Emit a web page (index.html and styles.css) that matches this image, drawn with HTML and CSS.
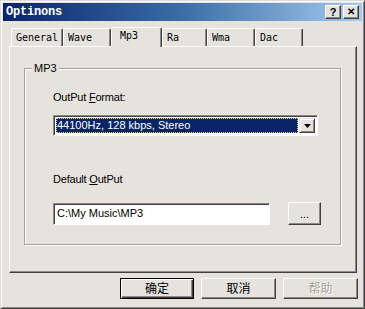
FILE: index.html
```html
<!DOCTYPE html>
<html lang="en">
<head>
    <meta charset="UTF-8">
    <title>Optinons</title>
    <link rel="stylesheet" href="styles.css">
</head>
<body>

    <div class="window">
        <div class="titlebar">
            <span class="title">Optinons</span>
            <div class="title-btns">
                <span class="tbtn">?</span>
                <span class="tbtn close">&#x2715;</span>
            </div>
        </div>

        <div class="tabs">
            <div class="tab t-general">General</div>
            <div class="tab t-wave">Wave</div>
            <div class="tab active t-mp3">Mp3</div>
            <div class="tab t-ra">Ra</div>
            <div class="tab t-wma">Wma</div>
            <div class="tab t-dac">Dac</div>
        </div>

        <div class="panel">
            <div class="group">
                <span class="group-title">MP3</span>
                <div class="label">OutPut <u>F</u>ormat:</div>
                <div class="combo">
                    <div class="combo-value"><span>44100Hz, 128 kbps, Stereo</span></div>
                    <div class="combo-arrow">
                        <svg width="7" height="4" viewBox="0 0 7 4"><path d="M0 0h7L3.5 4z" fill="#000"/></svg>
                    </div>
                </div>
                <div class="label second">Default <u>O</u>utPut</div>
                <div class="path-row">
                    <div class="textbox">C:\My Music\MP3</div>
                    <div class="btn browse">...</div>
                </div>
            </div>
        </div>

        <div class="buttons">
            <div class="btn default">确定</div>
            <div class="btn">取消</div>
            <div class="btn disabled">帮助</div>
        </div>
    </div>

</body>
</html>
```

FILE: styles.css
```css
:root {
    --face: #e6e3de;
    --light: #ffffff;
    --shadow: #8c8a86;
    --dark: #404040;
    --navy: #0a246a;
    --ui-font: 'Liberation Sans', Arial, sans-serif;
    --mono-font: 'Liberation Mono', 'DejaVu Sans Mono', monospace;
    --tab-font: 'DejaVu Sans Mono', 'Liberation Mono', monospace;
    --cjk-font: 'Noto Sans CJK SC', sans-serif;
}

body {
    margin: 0;
    background: var(--face);
}

/* Dialog frame */
.window {
    width: 365px;
    height: 309px;
    box-sizing: border-box;
    background: var(--face);
    border: 1px solid;
    border-color: #dcdad5 var(--dark) var(--dark) #dcdad5;
    box-shadow: inset 1px 1px 0 var(--light), inset -1px -1px 0 var(--shadow);
    padding: 2px;
    display: flex;
    flex-direction: column;
}

.titlebar {
    height: 18px;
    background: linear-gradient(to right, #0a246a 0%, #3a6ea5 50%, #a6caf0 100%);
    display: flex;
    align-items: center;
    justify-content: space-between;
    padding: 0 3px 0 3px;
}

.title {
    font-family: var(--mono-font);
    font-weight: bold;
    font-size: 12px;
    color: #fff;
    letter-spacing: -0.2px;
}

.title-btns {
    display: flex;
    gap: 2px;
}

.tbtn {
    width: 16px;
    height: 14px;
    box-sizing: border-box;
    background: var(--face);
    border: 1px solid;
    border-color: var(--light) var(--dark) var(--dark) var(--light);
    box-shadow: inset -1px -1px 0 var(--shadow);
    font-family: var(--ui-font);
    font-weight: bold;
    font-size: 11px;
    line-height: 12px;
    text-align: center;
    color: #000;
}

.tbtn.close {
    font-size: 10px;
}

/* Tab strip */
.tabs {
    display: flex;
    align-items: flex-end;
    height: 20px;
    margin-top: 5px;
    padding-left: 8px;
    position: relative;
    z-index: 1;
}

.tab {
    height: 18px;
    box-sizing: border-box;
    border-top: 1px solid var(--light);
    border-left: 1px solid var(--light);
    border-right: 1px solid var(--dark);
    box-shadow: inset -1px 0 0 var(--shadow);
    border-radius: 2px 2px 0 0;
    font-family: var(--tab-font);
    font-size: 10px;
    line-height: 18px;
    padding-left: 4px;
    color: #000;
}

.t-general { width: 52px; }
.t-wave { width: 48px; }
.t-mp3 { width: 51px; }
.t-ra { width: 45px; }
.t-wma { width: 48px; }
.t-dac { width: 48px; }

.tab.active {
    height: 20px;
    margin-bottom: -1px;
    background: var(--face);
    line-height: 16px;
    padding-left: 8px;
}

/* Tab page */
.panel {
    height: 227px;
    margin-left: 6px;
    width: 348px;
    box-sizing: border-box;
    border: 1px solid;
    border-color: var(--light) var(--dark) var(--dark) var(--light);
    box-shadow: inset -1px -1px 0 var(--shadow);
    padding: 21px 0 0 14px;
}

.group {
    position: relative;
    width: 317px;
    height: 177px;
    box-sizing: border-box;
    border: 1px solid #a3a19c;
    box-shadow: inset 1px 1px 0 var(--light), 1px 1px 0 var(--light);
    padding: 22px 0 0 28px;
    font-family: var(--ui-font);
    font-size: 11px;
    color: #000;
}

.group-title {
    position: absolute;
    left: 7px;
    top: -8px;
    padding: 0 2px;
    background: var(--face);
    line-height: 14px;
}

.label {
    line-height: 13px;
    letter-spacing: -0.2px;
}

.label u {
    text-decoration-thickness: 1px;
}

.combo {
    margin-top: 11px;
    width: 265px;
    height: 21px;
    box-sizing: border-box;
    border: 1px solid;
    border-color: var(--shadow) var(--light) var(--light) var(--shadow);
    box-shadow: inset 1px 1px 0 var(--dark);
    background: #fff;
    display: flex;
    padding: 2px 2px 2px 2px;
}

.combo-value {
    flex: 1;
    background: var(--navy);
    color: #fff;
    outline: 1px dotted #f0d080;
    outline-offset: -1px;
    font-size: 11px;
    line-height: 15px;
    padding-left: 1px;
    margin-right: 1px;
}

.combo-arrow {
    width: 16px;
    box-sizing: border-box;
    background: var(--face);
    border: 1px solid;
    border-color: var(--face) var(--dark) var(--dark) var(--face);
    box-shadow: inset 1px 1px 0 var(--light), inset -1px -1px 0 var(--shadow);
    display: flex;
    align-items: center;
    justify-content: center;
}

.label.second {
    margin-top: 37px;
}

.path-row {
    margin-top: 16px;
    display: flex;
    align-items: center;
    gap: 18px;
}

.textbox {
    width: 217px;
    height: 22px;
    box-sizing: border-box;
    border: 1px solid;
    border-color: var(--shadow) var(--light) var(--light) var(--shadow);
    box-shadow: inset 1px 1px 0 var(--dark);
    background: #fff;
    font-size: 11px;
    line-height: 19px;
    padding-left: 3px;
}

/* Push buttons */
.btn {
    height: 21px;
    box-sizing: border-box;
    background: var(--face);
    border: 1px solid;
    border-color: var(--light) var(--dark) var(--dark) var(--light);
    box-shadow: inset -1px -1px 0 var(--shadow);
    text-align: center;
    color: #000;
}

.btn.browse {
    width: 33px;
    height: 23px;
    font-family: var(--ui-font);
    font-size: 11px;
    line-height: 22px;
}

.buttons {
    display: flex;
    justify-content: flex-end;
    gap: 7px;
    margin-top: 5px;
    padding-right: 4px;
}

.buttons .btn {
    width: 75px;
    font-family: var(--cjk-font);
    font-size: 12px;
    line-height: 18px;
}

.btn.default {
    border: 1px solid #000;
    box-shadow: inset 1px 1px 0 var(--light), inset -1px -1px 0 var(--dark), inset -2px -2px 0 var(--shadow);
    width: 74px;
}

.btn.disabled {
    color: #a3a19c;
    text-shadow: 1px 1px 0 #fff;
}
```
